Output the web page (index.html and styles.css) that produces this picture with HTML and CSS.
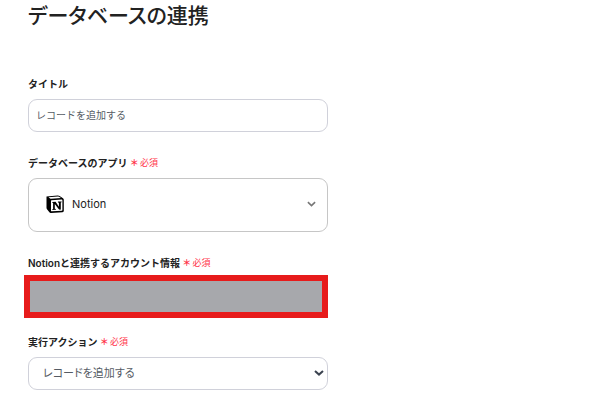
FILE: index.html
```html
<!DOCTYPE html>
<html lang="ja">
<head>
    <meta charset="UTF-8">
    <meta name="viewport" content="width=device-width, initial-scale=1.0">
    <title>データベースの連携</title>
    <link rel="stylesheet" href="styles.css">
</head>
<body>
    <h1>データベースの連携</h1>
    <form>
        <div class="field">
            <label for="title">タイトル</label>
            <input class="control" type="text" id="title" value="レコードを追加する">
        </div>
        <div class="field">
            <label for="app">データベースのアプリ<span class="required"><b>＊</b>必須</span></label>
            <button class="control app" type="button" id="app">
                <svg class="logo" viewBox="0 0 18 18">
                    <path fill="#000" d="M0.5 1.6 11.6 0.5Q12.8 0.4 13.6 1L17 3.2Q17.8 3.7 17.8 4.8V16Q17.8 17.1 16.5 17.2L4.9 17.9Q4 18 3.4 17.2L1 14.3Q.5 13.6.5 12.8Z"/>
                    <path fill="#fff" d="M2.5 2.3 11.8 1.5Q12.5 1.4 13 1.8L15 3.1 5 3.8Q4.5 3.8 4.1 3.5ZM5 5.8Q5 5.2 5.6 5.2L15.8 4.6Q16.4 4.6 16.4 5.2V15.1Q16.4 15.7 15.8 15.7L5.8 16.3Q5 16.4 5 15.7Z"/>
                    <path fill="#000" d="M6.3 7 9.6 6.8 12.9 11.8V7.7L11.9 7.4V6.6L15.6 6.4V7.2L14.8 7.6V14.6Q13.4 15 12.6 14.1L8.8 8.9V13.7L9.9 14V14.8L6.3 15V14.3L7.1 13.9V8L6.3 7.7Z"/>
                </svg>
                <span>Notion</span>
                <svg class="chevron" viewBox="0 0 10 6">
                    <path fill="none" stroke="#777" stroke-width="1.8" d="M1 1 5 4.8 9 1"/>
                </svg>
            </button>
        </div>
        <div class="field">
            <span class="label">Notionと連携するアカウント情報<span class="required"><b>＊</b>必須</span></span>
            <div class="masked"></div>
        </div>
        <div class="field">
            <label for="action">実行アクション<span class="required"><b>＊</b>必須</span></label>
            <div class="select">
                <select class="control" id="action">
                    <option>レコードを追加する</option>
                </select>
                <svg class="arrow" viewBox="0 0 10 6">
                    <path fill="none" stroke="#3b4350" stroke-width="2" d="M1 1 5 4.6 9 1"/>
                </svg>
            </div>
        </div>
    </form>
</body>
</html>
```
FILE: styles.css
```css
* {
    box-sizing: border-box;
}
body {
    margin: 0;
    padding: 0 28px 22px;
    background-color: #fff;
    color: #222;
    font-family: Inter, "Noto Sans CJK JP", sans-serif;
    font-size: 11px;
}
h1 {
    margin: 0 0 44px;
    font-size: 21px;
    font-weight: 500;
    font-feature-settings: "palt";
    line-height: 32px;
}
form {
    display: flex;
    flex-direction: column;
    gap: 23px;
    max-width: 300px;
}
.field {
    display: flex;
    flex-direction: column;
    gap: 7px;
}
label, .label {
    display: flex;
    align-items: center;
    gap: 3px;
    height: 16px;
    font-size: 10px;
    font-weight: 600;
    line-height: 16px;
}
.required {
    display: flex;
    gap: 2px;
    color: #ff3348;
    font-size: 9px;
    font-weight: 400;
    font-feature-settings: "palt";
}
.control {
    width: 100%;
    height: 33px;
    padding: 0 7px 2px;
    border: 1px solid #d0d1da;
    border-radius: 9px;
    background-color: #fff;
    color: #555b64;
    font-family: inherit;
    font-size: 10px;
}
.app {
    display: flex;
    align-items: center;
    gap: 8px;
    height: 54px;
    padding: 0 11px 2px 17px;
    border-color: #c6c6c6;
    color: #222;
    font-size: 11px;
}
.logo {
    width: 18px;
    height: 18px;
}
.chevron {
    width: 9px;
    height: 6px;
    margin-left: auto;
}
.masked {
    height: 43px;
    margin: -3px 0 -7px -4px;
    border: 6px solid #e71b1b;
    background-color: #a7a8ac;
}
.select {
    position: relative;
}
.select .control {
    display: block;
    padding: 0 24px 1px 14px;
    font-size: 11px;
    font-feature-settings: "palt";
    appearance: none;
}
.arrow {
    position: absolute;
    top: 13px;
    right: 4px;
    width: 10px;
    height: 6px;
    pointer-events: none;
}
```
